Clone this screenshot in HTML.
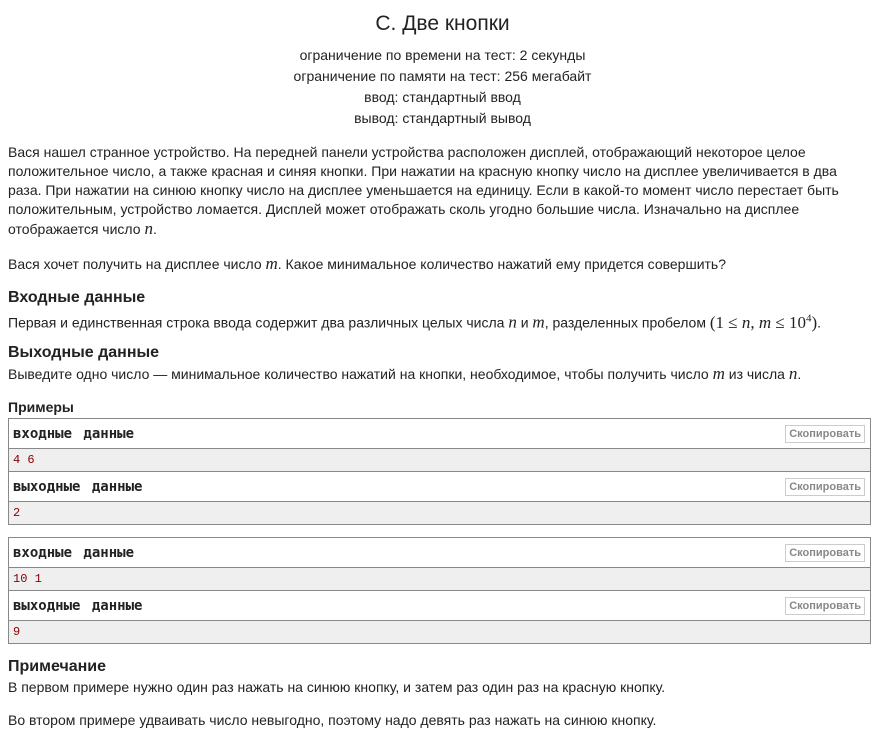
<!DOCTYPE html>
<html><head><meta charset="utf-8"><style>
body{margin:0;width:885px;height:734px;background:#fff;font-family:"Liberation Sans",Arial,sans-serif;color:#222;font-size:14px;position:relative;overflow:hidden}
.a{position:absolute;white-space:nowrap}
.c{left:0;width:885px;text-align:center}
.p{left:8px;line-height:19px;white-space:normal;width:860px}
.h{left:8px;font-size:16px;font-weight:bold}
i{font-family:"Liberation Serif",serif;font-size:17px}
.box{position:absolute;left:8px;width:861px;border:1px solid #888}
.hd{height:29px;border-bottom:1px solid #888;position:relative;font-family:"DejaVu Sans Mono","Liberation Mono",monospace;font-weight:bold;font-size:14px;line-height:31px;padding-left:4px;color:#222;word-spacing:3px}
.dt{height:22px;background:#efefef;border-bottom:1px solid #888;font-family:"Liberation Mono",monospace;font-size:12px;line-height:22px;padding-left:4px;color:#800}
.dt:last-child{border-bottom:none}
.btn{position:absolute;right:5px;top:6px;height:16px;border:1px solid #ccc;font-family:"Liberation Sans",sans-serif;font-weight:bold;font-size:11px;line-height:16px;color:#888;padding:0 3px;word-spacing:0}
</style></head><body>
<div class="a c" style="top:12px;font-size:21px;color:#222">C. Две кнопки</div>
<div class="a c" style="top:47px">ограничение по времени на тест: 2 секунды</div>
<div class="a c" style="top:68px">ограничение по памяти на тест: 256 мегабайт</div>
<div class="a c" style="top:89px">ввод: стандартный ввод</div>
<div class="a c" style="top:110px">вывод: стандартный вывод</div>
<div class="a p" style="top:143px">Вася нашел странное устройство. На передней панели устройства расположен дисплей, отображающий некоторое целое положительное число, а также красная и синяя кнопки. При нажатии на красную кнопку число на дисплее увеличивается в два раза. При нажатии на синюю кнопку число на дисплее уменьшается на единицу. Если в какой-то момент число перестает быть положительным, устройство ломается. Дисплей может отображать сколь угодно большие числа. Изначально на дисплее отображается число <i>n</i>.</div>
<div class="a p" style="top:254px">Вася хочет получить на дисплее число <i>m</i>. Какое минимальное количество нажатий ему придется совершить?</div>
<div class="a h" style="top:289px">Входные данные</div>
<div class="a p" style="top:309px">Первая и единственная строка ввода содержит два различных целых числа <i>n</i> и <i>m</i>, разделенных пробелом <span style="font-family:'Liberation Serif',serif;font-size:17px">(1 ≤ <i>n</i>, <i>m</i> ≤ 10<sup style="font-size:11px">4</sup>)</span>.</div>
<div class="a h" style="top:344px">Выходные данные</div>
<div class="a p" style="top:364px">Выведите одно число — минимальное количество нажатий на кнопки, необходимое, чтобы получить число <i>m</i> из числа <i>n</i>.</div>
<div class="a" style="left:8px;top:399px;font-weight:bold;font-size:14px">Примеры</div>
<div class="box" style="top:418px">
<div class="hd">входные данные<span class="btn">Скопировать</span></div>
<div class="dt">4 6</div>
<div class="hd">выходные данные<span class="btn">Скопировать</span></div>
<div class="dt">2</div>
</div>
<div class="box" style="top:537px">
<div class="hd">входные данные<span class="btn">Скопировать</span></div>
<div class="dt">10 1</div>
<div class="hd">выходные данные<span class="btn">Скопировать</span></div>
<div class="dt">9</div>
</div>
<div class="a h" style="top:658px">Примечание</div>
<div class="a p" style="top:678px">В первом примере нужно один раз нажать на синюю кнопку, и затем раз один раз на красную кнопку.</div>
<div class="a p" style="top:711px">Во втором примере удваивать число невыгодно, поэтому надо девять раз нажать на синюю кнопку.</div>
</body></html>
